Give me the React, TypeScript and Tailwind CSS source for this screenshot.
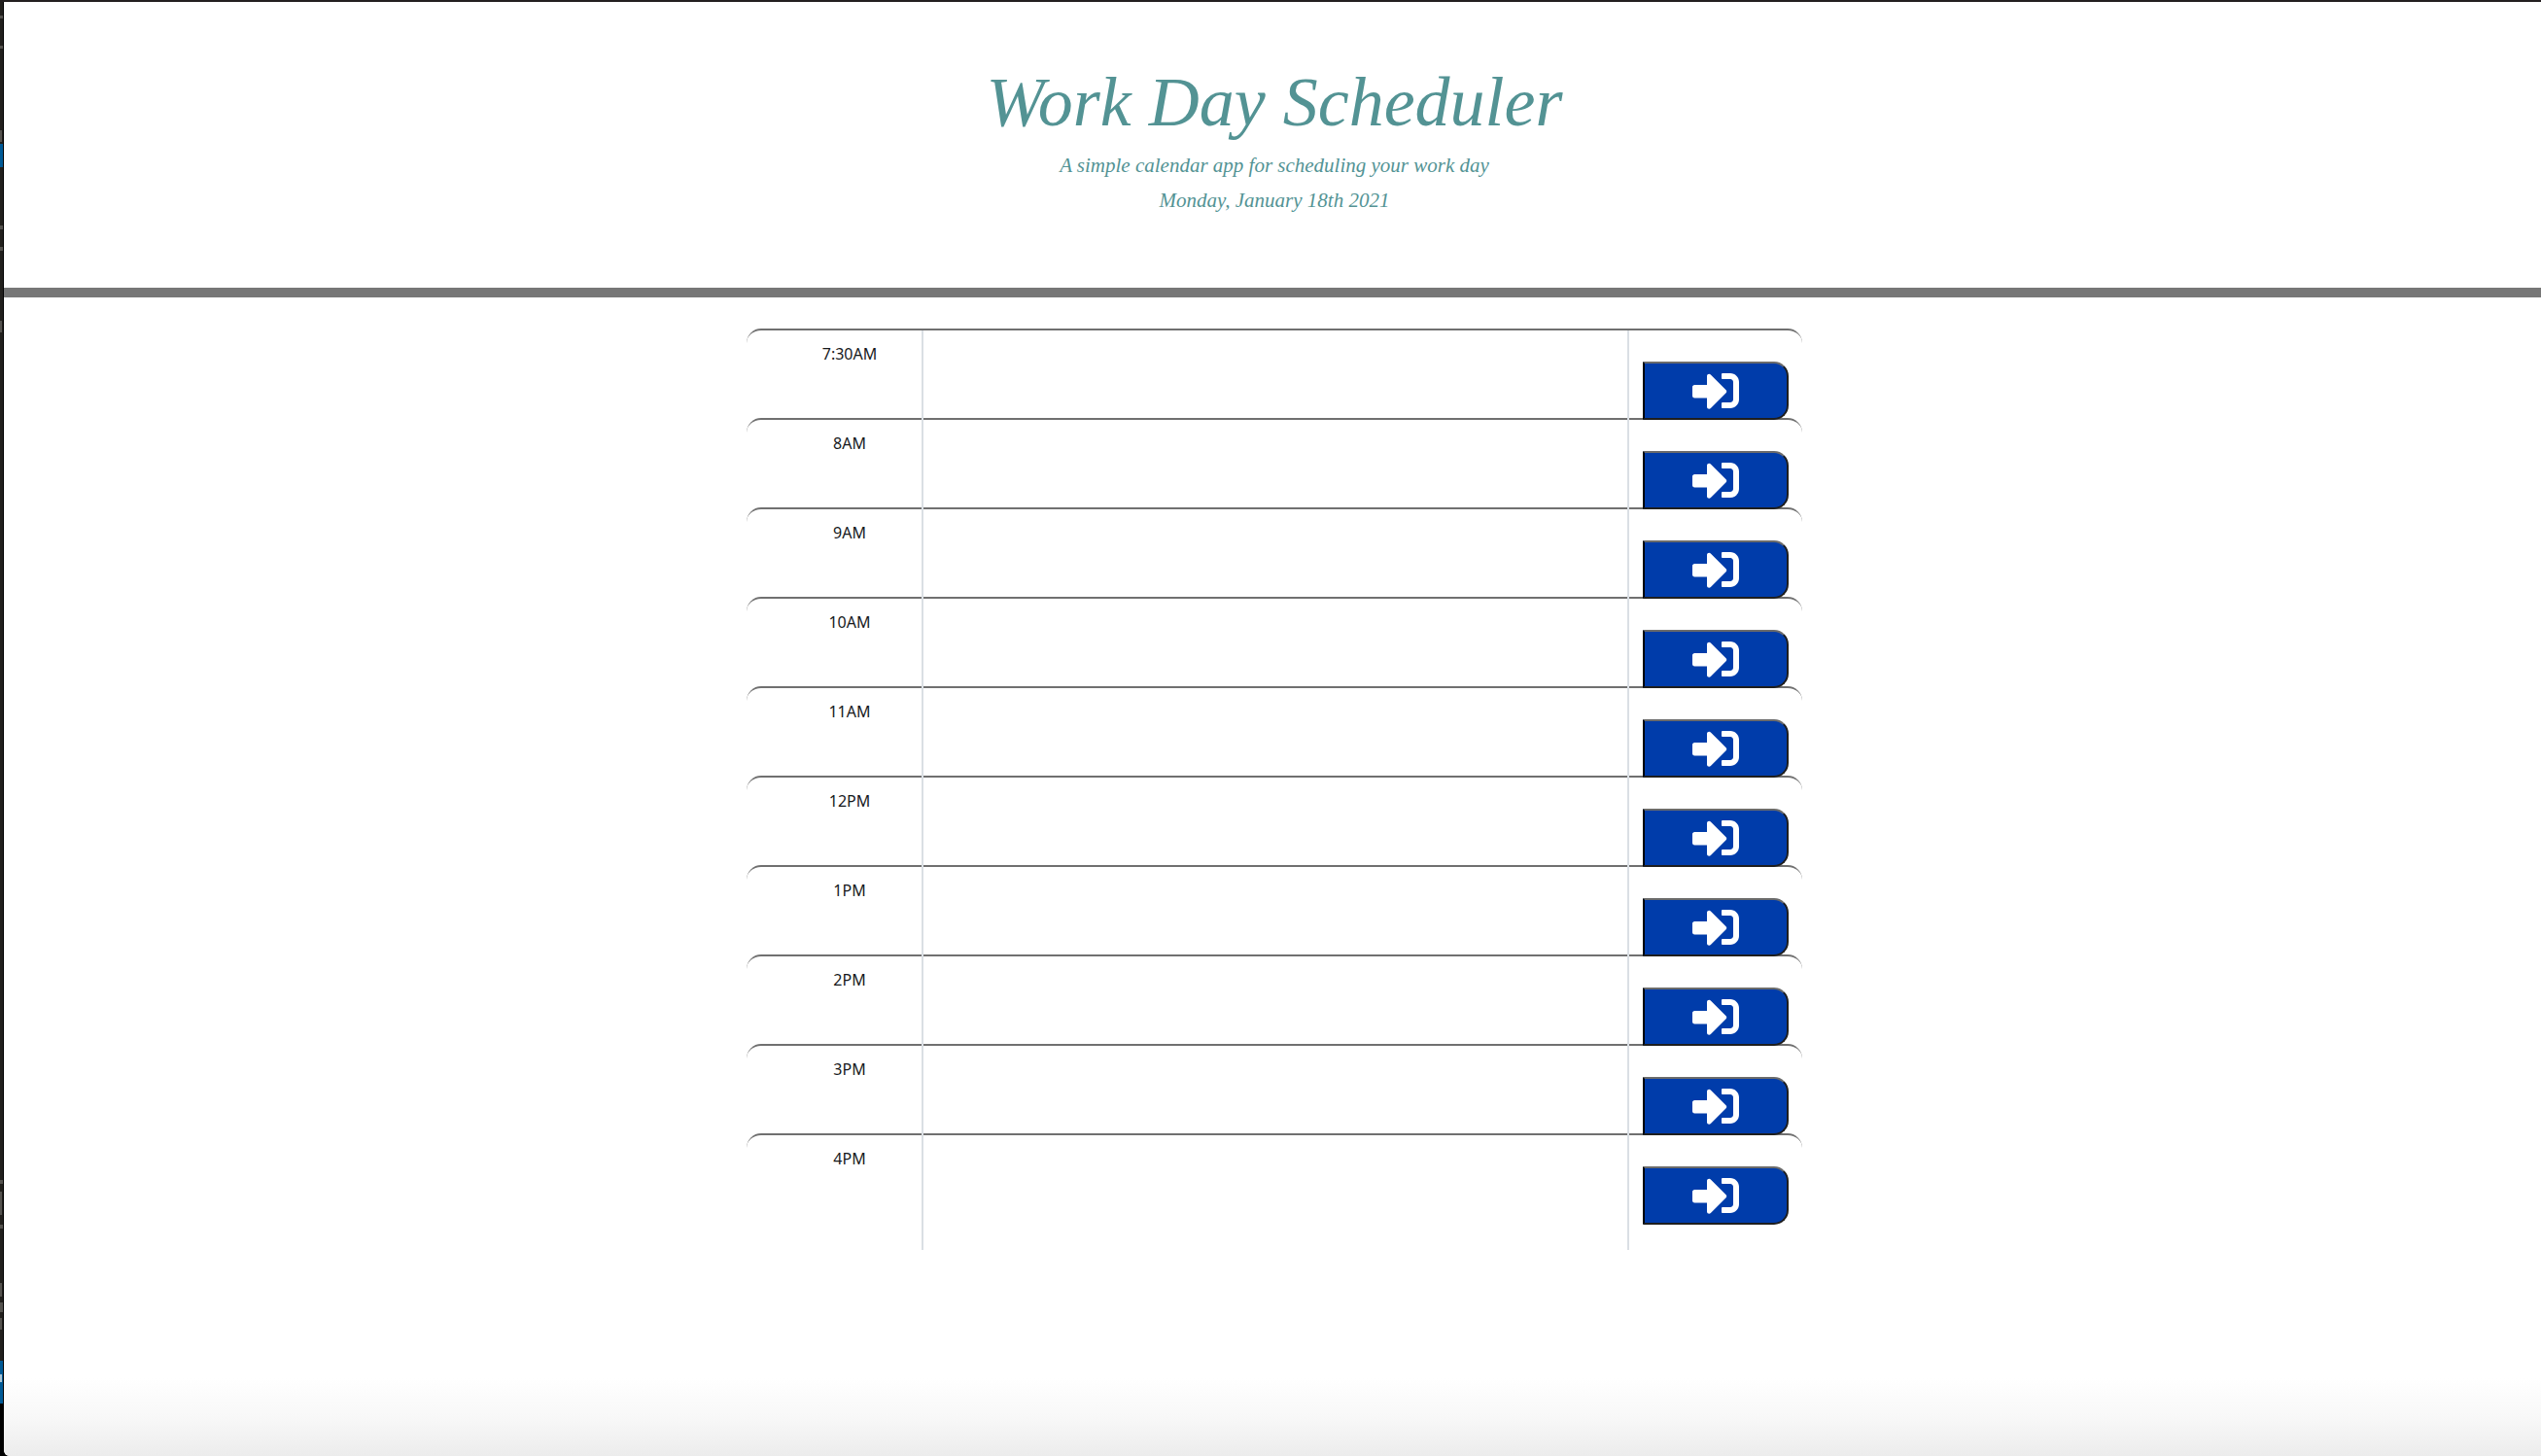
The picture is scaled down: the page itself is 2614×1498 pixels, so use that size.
import { FaSignInAlt } from "react-icons/fa";

const hours = ["7:30AM", "8AM", "9AM", "10AM", "11AM", "12PM", "1PM", "2PM", "3PM", "4PM"];

function TimeBlock({ hour }: { hour: string }) {
  const id = `task-${hour}`;
  return (
    <li className="flex h-[92px] rounded-t-[15px] border-t-2 border-[#707070] last:h-[118px]">
      <label
        htmlFor={id}
        className="z-10 -mb-0.5 w-[182px] shrink-0 border-r-2 border-[#dadfe4] pt-3 pl-8 text-center text-base text-[#16191c]"
      >
        {hour}
      </label>
      <textarea
        id={id}
        className="z-10 -mb-0.5 min-w-0 flex-1 resize-none border-r-2 border-[#dadfe4] p-3 outline-none"
      />
      <div className="z-10 -mb-0.5 flex w-[178px] shrink-0 items-start justify-center pt-8">
        <button
          type="button"
          aria-label={`Save ${hour}`}
          className="flex h-[60px] w-[150px] items-center justify-center rounded-r-[15px] border-2 border-t-[#6b6b6b] border-r-[#1e1e1e] border-b-[#1e1e1e] border-l-black bg-[#003caa] text-white"
        >
          <FaSignInAlt size={48} />
        </button>
      </div>
    </li>
  );
}

function WindowEdge() {
  return (
    <div className="flex w-1 shrink-0 flex-col border-r border-black bg-[#22201d]">
      <div className="mt-3.5 h-[3px] bg-[#55534f]" />
      <div className="mt-7 h-[3px] bg-[#55534f]" />
      <div className="mt-21 h-3 w-0.5 bg-[#55534f]" />
      <div className="mt-0.5 h-6 bg-[#005a96]" />
      <div className="mt-15 h-1 bg-[#55534f]" />
      <div className="mt-[18px] h-1 bg-[#55534f]" />
      <div className="mt-18 h-3 w-0.5 bg-[#55534f]" />
      <div className="mt-auto h-1 bg-[#55534f]" />
      <div className="mt-2 h-6 w-0.5 bg-[#55534f]" />
      <div className="mt-2.5 h-1 bg-[#55534f]" />
      <div className="mt-14 h-3.5 w-0.5 bg-[#55534f]" />
      <div className="mt-1.5 h-2.5 bg-[#55534f]" />
      <div className="mt-1.5 h-3 w-0.5 bg-[#55534f]" />
      <div className="mt-8 h-11 bg-[#005a96] pt-3.5">
        <div className="h-2 w-0.5 bg-[#a8c4d6]" />
      </div>
      <div className="h-[54px] bg-black" />
    </div>
  );
}

export default function App() {
  return (
    <div className="flex min-h-screen border-t-2 border-[#231f20] bg-black">
      <WindowEdge />
      <div className="flex min-w-0 flex-1 flex-col overflow-hidden rounded-bl-md bg-white">
        <header className="flex h-[304px] flex-col items-center border-b-10 border-[#777777] pt-14 pl-1 font-['Liberation_Serif'] text-[#539394] italic">
          <h1 className="text-[72px] leading-[94px]">Work Day Scheduler</h1>
          <p className="text-[21px] leading-9">A simple calendar app for scheduling your work day</p>
          <p className="text-[21px] leading-9">Monday, January 18th 2021</p>
        </header>
        <main className="flex justify-center pt-8 pl-1 font-['Noto_Sans']">
          <ul className="w-full max-w-[1086px]">
            {hours.map((hour) => (
              <TimeBlock key={hour} hour={hour} />
            ))}
          </ul>
        </main>
        <div className="mt-auto h-20 bg-linear-to-b from-white via-[#f8f8f8] to-[#ececec]" />
      </div>
    </div>
  );
}
